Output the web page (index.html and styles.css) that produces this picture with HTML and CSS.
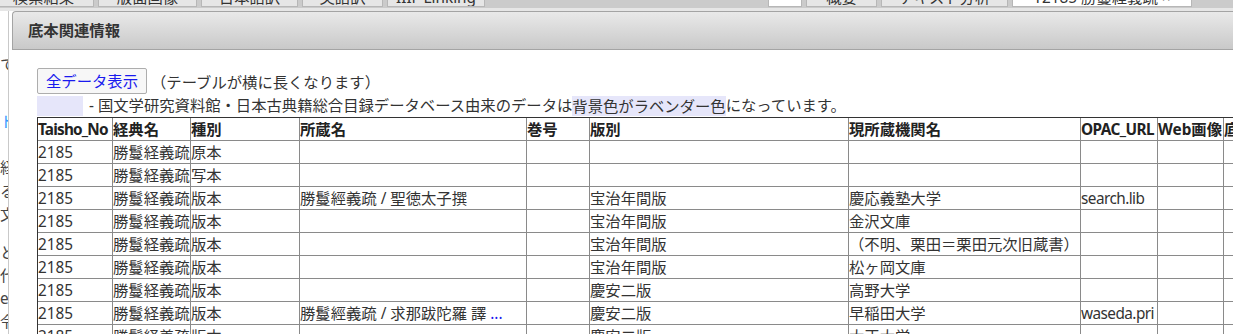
FILE: index.html
```html
<!DOCTYPE html>
<html lang="ja">
<head>
<meta charset="utf-8">
<title>底本関連情報</title>
<link rel="stylesheet" href="styles.css">
</head>
<body>
<div class="tabs">
  <div class="tab t1">検索結果</div>
  <div class="tab t2">版面画像</div>
  <div class="tab t3">日本語訳</div>
  <div class="tab t4">英語訳</div>
  <div class="tab t5">IIIF Linking</div>
  <div class="tab tbox"></div>
  <div class="tab t6">概要</div>
  <div class="tab t7">テキスト分析</div>
  <div class="tab active">T2185 勝鬘経義疏 ×</div>
</div>
<div class="main">
  <div class="side">
    <div class="sl g1">て。</div>
    <div class="sl g2 blue">ト</div>
    <div class="sl g3">経</div>
    <div class="sl g4">る</div>
    <div class="sl">文</div>
    <div class="sl g5">と</div>
    <div class="sl">代</div>
    <div class="sl">e'</div>
    <div class="sl">令</div>
  </div>
  <div class="content">
    <div class="panel-head">底本関連情報</div>
    <div class="panel-body">
      <div class="toolbar">
        <button class="btn">全データ表示</button>
        <span class="note">（テーブルが横に長くなります）</span>
      </div>
      <div class="legend"><span class="lav-box"></span><span class="legend-text">- 国文学研究資料館・日本古典籍総合目録データベース由来のデータは<span class="hl">背景色がラベンダー色</span>になっています。</span></div>
      <table class="tbl">
        <thead>
          <tr>
            <th class="c1 lat-b">Taisho_No</th>
            <th class="c2">経典名</th>
            <th class="c3">種別</th>
            <th class="c4">所蔵名</th>
            <th class="c5">巻号</th>
            <th class="c6">版別</th>
            <th class="c7">現所蔵機関名</th>
            <th class="c8 lat">OPAC_URL</th>
            <th class="c9">Web画像</th>
            <th class="c10">底本</th>
          </tr>
        </thead>
        <tbody>
          <tr><td>2185</td><td>勝鬘経義疏</td><td>原本</td><td></td><td></td><td></td><td></td><td></td><td></td><td></td></tr>
          <tr><td>2185</td><td>勝鬘経義疏</td><td>写本</td><td></td><td></td><td></td><td></td><td></td><td></td><td></td></tr>
          <tr><td>2185</td><td>勝鬘経義疏</td><td>版本</td><td>勝鬘經義疏 / 聖徳太子撰</td><td></td><td>宝治年間版</td><td>慶応義塾大学</td><td class="lat">search.lib</td><td></td><td></td></tr>
          <tr><td>2185</td><td>勝鬘経義疏</td><td>版本</td><td></td><td></td><td>宝治年間版</td><td>金沢文庫</td><td></td><td></td><td></td></tr>
          <tr><td>2185</td><td>勝鬘経義疏</td><td>版本</td><td></td><td></td><td>宝治年間版</td><td>（不明、栗田＝栗田元次旧蔵書）</td><td></td><td></td><td></td></tr>
          <tr><td>2185</td><td>勝鬘経義疏</td><td>版本</td><td></td><td></td><td>宝治年間版</td><td>松ヶ岡文庫</td><td></td><td></td><td></td></tr>
          <tr><td>2185</td><td>勝鬘経義疏</td><td>版本</td><td></td><td></td><td>慶安二版</td><td>高野大学</td><td></td><td></td><td></td></tr>
          <tr><td>2185</td><td>勝鬘経義疏</td><td>版本</td><td>勝鬘經義疏 / 求那跋陀羅 譯 <a class="more">...</a></td><td></td><td>慶安二版</td><td>早稲田大学</td><td class="lat">waseda.pri</td><td></td><td></td></tr>
          <tr><td>2185</td><td>勝鬘経義疏</td><td>版本</td><td></td><td></td><td>慶安二版</td><td>大正大学</td><td></td><td></td><td></td></tr>
        </tbody>
      </table>
    </div>
  </div>
</div>
</body>
</html>
```
FILE: styles.css
```css
html, body {
  margin: 0;
  padding: 0;
  overflow: hidden;
  background: #fff;
}
body {
  font-family: "Noto Sans", "Noto Sans CJK JP", sans-serif;
  font-size: 15.33px;
  color: #333;
  width: 1233px;
  height: 334px;
}

/* top tab strip (scrolled so only the bottom of the tabs shows) */
.tabs {
  display: flex;
  gap: 4px;
  height: 8px;
  overflow: hidden;
  background: #cbcbcb;
  align-items: flex-end;
  border-bottom: 3px solid #e6e6e6;
}
.tab {
  flex: none;
  box-sizing: border-box;
  height: 28px;
  margin-bottom: 1px;
  border: 1px solid #b7b7b7;
  border-top: none;
  background: #e6e6e6;
  padding-top: 7px;
  line-height: 22px;
  text-align: center;
  white-space: nowrap;
  overflow: hidden;
  color: #333;
}
.t1 { width: 101px; margin-left: -7px; }
.t2 { width: 99px; }
.t3 { width: 97px; }
.t4 { width: 81px; }
.t5 { width: 98px; margin-right: 279px; }
.tbox { width: 34px; background: #fff; }
.t6 { width: 71px; }
.t7 { width: 127px; }
.active { width: 180px; background: #fff; }

.main {
  display: flex;
  height: 323px;
}
.side {
  flex: none;
  width: 8px;
  border-right: 1px solid #c9c9c9;
  overflow: hidden;
  white-space: nowrap;
  background: #fff;
}
.sl {
  height: 23px;
  line-height: 23px;
  color: #444;
}
.sl.blue { color: #3399ff; }
.g1 { margin-top: 42px; }
.g2 { margin-top: 34px; }
.g3 { margin-top: 23px; }
.g4 { margin-top: 1px; }
.g5 { margin-top: 15px; }

.content {
  flex: 1;
  min-width: 0;
  padding-left: 3px;
  overflow: hidden;
}
.panel-head {
  box-sizing: border-box;
  height: 39px;
  border: 1px solid #a4a4a4;
  border-right: none;
  border-top-left-radius: 4px;
  background: linear-gradient(#e9e9e9, #c9c9c9);
  padding-left: 15px;
  line-height: 37px;
  font-weight: bold;
  color: #333;
}
.panel-body {
  padding: 18px 0 0 25px;
}
.toolbar {
  display: flex;
  align-items: center;
  height: 26px;
  white-space: nowrap;
}
.btn {
  box-sizing: border-box;
  width: 110px;
  height: 26px;
  padding: 0;
  border: 1px solid #adadad;
  border-radius: 2px;
  background: #f7f7f7;
  color: #1a1aee;
  font: inherit;
  line-height: 24px;
  text-align: center;
}
.note {
  margin-left: 4px;
  color: #333;
}
.legend {
  height: 23px;
  line-height: 23px;
  white-space: nowrap;
}
.lav-box {
  display: inline-block;
  width: 46px;
  height: 20px;
  margin-top: 2px;
  vertical-align: top;
  background: #e6e6fa;
}
.legend-text {
  padding-left: 6px;
}
.hl {
  display: inline-block;
  vertical-align: top;
  margin-top: 2px;
  line-height: 20px;
  height: 20px;
  background: #e6e6fa;
}

.tbl {
  border-collapse: separate;
  border-spacing: 0;
  table-layout: fixed;
  width: 1307px;
  border-top: 1px solid #333;
  border-left: 1px solid #333;
}
.tbl th, .tbl td {
  box-sizing: border-box;
  height: 23px;
  padding: 0;
  border-right: 1px solid #8a8a8a;
  border-bottom: 1px solid #8a8a8a;
  line-height: 22px;
  text-align: left;
  white-space: nowrap;
  overflow: hidden;
  vertical-align: middle;
  color: #333;
}
.tbl th {
  font-weight: bold;
  color: #222;
}
.tbl .lat { letter-spacing: -0.55px; }
.tbl .lat-b { letter-spacing: -0.8px; }
.c1 { width: 75px; }
.c2 { width: 78px; }
.c3 { width: 109px; }
.c4 { width: 227px; }
.c5 { width: 63px; }
.c6 { width: 259px; }
.c7 { width: 232px; }
.c8 { width: 77px; }
.c9 { width: 66px; }
.c10 { width: 120px; }
.more {
  color: #1a1aee;
}
```
